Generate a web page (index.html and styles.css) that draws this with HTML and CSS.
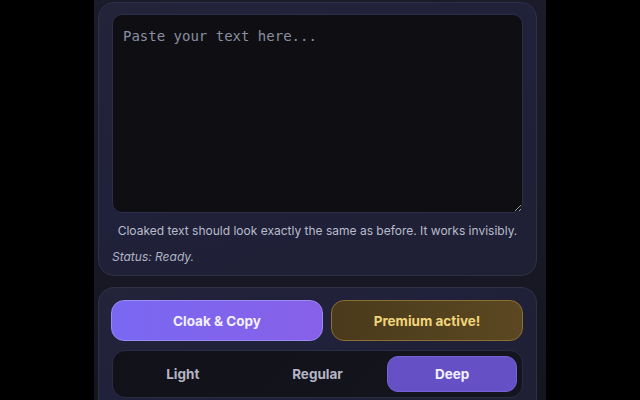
FILE: index.html
```html
<!DOCTYPE html>
<html>
<head>
<meta charset="utf-8">
<link rel="stylesheet" href="styles.css">
</head>
<body>
<div class="app">
  <section class="card editor">
    <textarea class="input" placeholder="Paste your text here..."></textarea>
    <p class="hint">Cloaked text should look exactly the same as before. It works invisibly.</p>
    <p class="status">Status: Ready.</p>
  </section>
  <section class="card controls">
    <div class="actions">
      <button class="btn primary">Cloak &amp; Copy</button>
      <button class="btn premium">Premium active!</button>
    </div>
    <div class="segment">
      <button class="seg">Light</button>
      <button class="seg">Regular</button>
      <button class="seg active">Deep</button>
    </div>
  </section>
</div>
</body>
</html>
```
FILE: styles.css
```css
* { box-sizing: border-box; }
html, body { margin: 0; height: 100%; background: #000; overflow: hidden; }
body { font-family: Inter, "Noto Sans", sans-serif; }
.app {
  width: 452px;
  height: 400px;
  margin-left: 94px;
  padding: 2px 9px 0 4px;
  background: linear-gradient(180deg, #1b1b2a 0%, #191926 60%, #15151e 100%);
  display: flex;
  flex-direction: column;
  gap: 11px;
}
.card {
  background: linear-gradient(160deg, #23243a 0%, #20213a 50%, #1f2034 100%);
  border: 1px solid #2e3048;
  border-radius: 16px;
}
.editor {
  height: 274px;
  flex-shrink: 0;
  padding: 11px 13px 0 13px;
  display: flex;
  flex-direction: column;
}
.input {
  display: block;
  flex-shrink: 0;
  width: 100%;
  height: 199px;
  resize: vertical;
  background: #0f0f13;
  border: 1px solid #2c2d48;
  border-radius: 10px;
  padding: 13px 10px;
  font-family: "DejaVu Sans Mono", monospace;
  font-size: 14px;
  color: #d0d2dc;
  outline: none;
}
.input::placeholder { color: #8a8ea0; }
.hint {
  margin: 9px 0 0;
  text-align: center;
  white-space: nowrap;
  font-size: 12px;
  color: #b9bccb;
  line-height: 18px;
}
.status {
  margin: 8px 0 0;
  font-size: 12px;
  font-style: italic;
  color: #b0b3c3;
  line-height: 18px;
}
.controls {
  flex: 1;
  padding: 12px 13px 0 12px;
  border-bottom: none;
  border-radius: 16px 16px 0 0;
}
.actions {
  display: flex;
  gap: 8px;
  height: 41px;
}
.btn {
  font-family: Inter, sans-serif;
  font-weight: 700;
  font-size: 13.5px;
  border-radius: 13px;
  cursor: pointer;
}
.primary {
  width: 212px;
  color: #f3f0ff;
  background: linear-gradient(90deg, #7a68f2 0%, #8760e8 100%);
  border: 1px solid #9a8bf6;
}
.premium {
  flex: 1;
  color: #f1d57a;
  background: linear-gradient(90deg, #4a3a1b 0%, #5b4822 100%);
  border: 1px solid #8a7034;
}
.segment {
  margin: 9px 0 0 1px;
  height: 48px;
  background: linear-gradient(135deg, #111119 0%, #15151f 100%);
  border: 1px solid #2a2b44;
  border-radius: 13px;
  padding: 5px 5px;
  display: grid;
  grid-template-columns: repeat(3, 1fr);
  gap: 5px;
}
.seg {
  font-family: Inter, sans-serif;
  font-weight: 700;
  font-size: 13.5px;
  color: #b3b5c4;
  background: transparent;
  border: none;
  border-radius: 11px;
}
.seg.active {
  color: #f3f1ff;
  background: #6650c6;
  border: 1px solid #7463d2;
}
```
